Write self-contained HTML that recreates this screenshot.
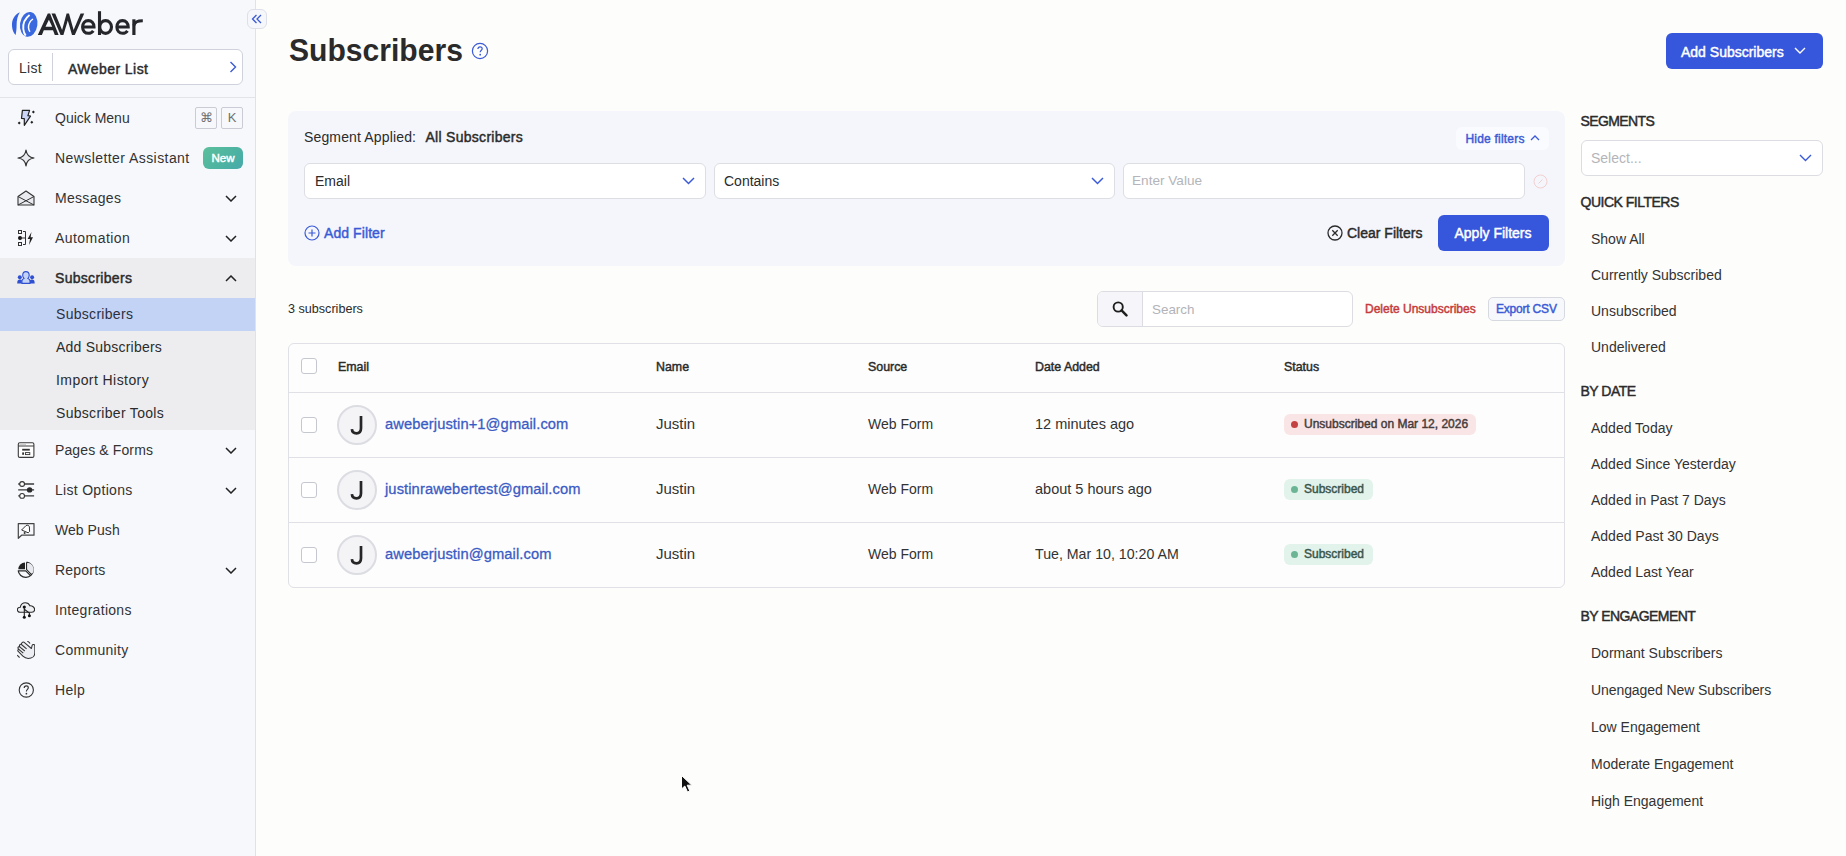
<!DOCTYPE html>
<html><head><meta charset="utf-8">
<style>
*{box-sizing:border-box;margin:0;padding:0}
html,body{width:1846px;height:856px;overflow:hidden}
body{position:relative;background:#fdfdfc;font-family:"Liberation Sans",sans-serif;color:#2b2b2b}
.a{position:absolute;white-space:nowrap}
#sb{position:absolute;left:0;top:0;width:256px;height:856px;background:#f7f8fc;border-right:1px solid #dfe2e8}
.row{position:absolute;left:0;width:255px;height:40px;line-height:40px;font-size:14px;color:#333}
.row .t{position:absolute;left:55px;top:0;letter-spacing:0.3px}
.row svg.ic{position:absolute;left:17px;top:11px}
.row svg.ch{position:absolute;left:225px;top:17px}
.sub{position:absolute;left:0;width:255px;height:33px;line-height:33px;font-size:14px;color:#2b2b2b}
.sub .t{position:absolute;left:56px;top:0;letter-spacing:0.3px}
</style></head><body>

<!-- SIDEBAR -->
<div id="sb">
  <!-- logo -->
  <svg class="a" style="left:0;top:0" width="40" height="42" viewBox="0 0 40 42">
    <path d="M19.8 12.3 C14.5 14.5 11.6 20 12 26 C12.3 30 13.8 33.5 15.6 35 C16.2 32 16.6 29 16.6 25.5 C16.6 20.5 17.5 16 19.8 12.3 Z" fill="#3463dd"/>
    <ellipse cx="28.7" cy="24.4" rx="8.7" ry="12.5" fill="#3a68de" transform="rotate(8 28.7 24.4)"/>
    <path d="M29.6 15 C25 18.5 22.8 24 23.3 29 C23.6 32 24.5 34 25.7 35.6" stroke="#fff" stroke-width="1.9" fill="none"/>
    <path d="M33 19 C30 21 28.4 24.5 28.5 27.5 C28.6 29.5 29.2 30.8 30 31.8" stroke="#fff" stroke-width="1.5" fill="none"/>
  </svg>
  <svg class="a" style="left:0;top:0" width="150" height="42" viewBox="0 0 150 42">
    <g fill="none" stroke="#25262b" stroke-width="3.3" stroke-linejoin="miter">
      <path d="M37.8 34.9 L47.8 13.4 L50.1 13.4 L58.6 34.9 L54.8 34.9 L53 30.3 L43.8 30.3 L41.9 34.9 Z M48.9 19.8 L45.5 26.7 L52.2 26.7 Z" fill="#25262b" stroke="none" fill-rule="evenodd"/>
      <path d="M51.5 13.4 L55.2 13.4 L62.1 30 L66.6 13.4 L69 13.4 L73.6 30 L80.6 13.4 L84.2 13.4 L74.8 35 L72 35 L67.8 20.6 L63.4 35 L60.6 35 Z" fill="#25262b" stroke="none"/>
      <path d="M82.6 27 L94 27 C94 23 91.5 20.6 88.3 20.6 C84.8 20.6 82.6 23.3 82.6 27 C82.6 30.8 85 33.3 88.4 33.3 C90.6 33.3 92.2 32.3 93.3 30.8" stroke-width="3.1"/>
      <path d="M99.5 11.2 L99.5 35" stroke-width="3.1"/>
      <ellipse cx="105.6" cy="27" rx="5.9" ry="6.35" stroke-width="3.1"/>
      <path d="M116.9 27 L128.2 27 C128.2 23 125.7 20.6 122.5 20.6 C119 20.6 116.9 23.3 116.9 27 C116.9 30.8 119.2 33.3 122.6 33.3 C124.8 33.3 126.4 32.3 127.5 30.8" stroke-width="3.1"/>
      <path d="M133.9 19.3 L133.9 35" stroke-width="3.2"/>
      <path d="M133.9 25.5 C134.5 22 137.5 20.8 142.8 20.8" stroke-width="3"/>
    </g>
  </svg>
  <!-- collapse btn -->
  <div class="a" style="left:247px;top:9px;width:20px;height:20px;border:1px solid #dde0e8;border-radius:6px;background:#f6f7fb;z-index:3"></div>
  <svg class="a" style="left:251px;top:14px;z-index:4" width="12" height="10" viewBox="0 0 12 10"><path d="M5.5 1 L1.5 5 L5.5 9 M10 1 L6 5 L10 9" stroke="#3b5bd6" stroke-width="1.3" fill="none"/></svg>

  <!-- list selector -->
  <div class="a" style="left:8px;top:49px;width:235px;height:36px;border:1px solid #cfd2da;border-radius:6px;background:#fff"></div>
  <div class="a" style="left:19px;top:50px;line-height:36px;font-size:14px;color:#333;letter-spacing:0.3px">List</div>
  <div class="a" style="left:52px;top:53px;width:1px;height:28px;background:#cfd2da"></div>
  <div class="a" style="left:68px;top:50.5px;line-height:36px;font-size:14px;color:#2b2b2b;letter-spacing:0.45px;-webkit-text-stroke:0.45px #2b2b2b;">AWeber List</div>
  <svg class="a" style="left:229px;top:61px" width="8" height="12" viewBox="0 0 8 12"><path d="M1.5 1 L6.5 6 L1.5 11" stroke="#3b5bd6" stroke-width="1.4" fill="none"/></svg>

  <div class="a" style="left:0;top:97px;width:255px;height:1px;background:#e2e4ea"></div>

  <!-- Quick menu -->
  <div class="row" style="top:98px">
    <svg class="ic" width="18" height="18" viewBox="0 0 18 18"><path d="M5.4 1.4 L12.6 1.4 L10.9 6.6 L13.5 7.1 L7.3 16.3 L7.3 9.7 L4.5 9.4 Z" fill="#c9d4f6" stroke="#222" stroke-width="1.2" stroke-linejoin="round"/><path d="M16.4 1.4 L17.9 2.9 L16.4 4.4 L14.9 2.9 Z M2.2 12.4 L3.7 13.9 L2.2 15.4 L0.7 13.9 Z M14.8 11.7 L16.3 13.2 L14.8 14.7 L13.3 13.2 Z" fill="#222"/></svg>
    <span class="t" style="letter-spacing:0">Quick Menu</span>
    <div class="a" style="left:195px;top:9px;width:22px;height:22px;border:1px solid #c9ccd4;border-radius:2px;line-height:20px;text-align:center;font-size:13px;color:#707070">&#8984;</div>
    <div class="a" style="left:221px;top:9px;width:22px;height:22px;border:1px solid #c9ccd4;border-radius:2px;line-height:20px;text-align:center;font-size:13px;color:#707070">K</div>
  </div>
  <!-- Newsletter -->
  <div class="row" style="top:138px">
    <svg class="ic" width="18" height="18" viewBox="0 0 18 18"><path d="M9 1 C9.6 6 12 8.4 17 9 C12 9.6 9.6 12 9 17 C8.4 12 6 9.6 1 9 C6 8.4 8.4 6 9 1 Z" fill="#e9eaef" stroke="#333" stroke-width="1.2" stroke-linejoin="round"/></svg>
    <span class="t" style="letter-spacing:0.43px">Newsletter Assistant</span>
    <div class="a" style="left:203px;top:9px;width:40px;height:22px;border-radius:6px;background:linear-gradient(135deg,#5cbf9c 0%,#4db3a2 60%,#47a9ab 100%);color:#fff;font-size:11.5px;line-height:22px;text-align:center;-webkit-text-stroke:0.45px #fff;">New</div>
  </div>
  <!-- Messages -->
  <div class="row" style="top:178px">
    <svg class="ic" width="18" height="18" viewBox="0 0 18 18"><path d="M1 7.5 L9 2 L17 7.5 L17 16 L1 16 Z" fill="#e9eaef" stroke="#333" stroke-width="1.1" stroke-linejoin="round"/><path d="M1 7.5 L17 16 M17 7.5 L1 16" fill="none" stroke="#333" stroke-width="1"/></svg>
    <span class="t">Messages</span>
    <svg class="ch" width="12" height="7" viewBox="0 0 12 7"><path d="M1 1 L6 6 L11 1" stroke="#222" stroke-width="1.5" fill="none"/></svg>
  </div>
  <!-- Automation -->
  <div class="row" style="top:218px">
    <svg class="ic" width="18" height="18" viewBox="0 0 18 18"><rect x="1.5" y="1.5" width="3" height="3" fill="none" stroke="#333" stroke-width="1"/><circle cx="3" cy="9" r="2" fill="#111"/><rect x="1.5" y="13.5" width="3" height="3" fill="none" stroke="#333" stroke-width="1"/><path d="M6 2.5 L8.5 2.5 L8.5 15.5 L6 15.5 M3 9 L8.5 9" fill="none" stroke="#333" stroke-width="1"/><path d="M14.5 3 L10.6 10 L13 10 L12 16 L16 8.3 L13.6 8.3 Z" fill="#222"/></svg>
    <span class="t" style="letter-spacing:0.45px">Automation</span>
    <svg class="ch" width="12" height="7" viewBox="0 0 12 7"><path d="M1 1 L6 6 L11 1" stroke="#222" stroke-width="1.5" fill="none"/></svg>
  </div>
  <!-- Subscribers group -->
  <div class="a" style="left:0;top:258px;width:255px;height:172px;background:#ededef"></div>
  <div class="row" style="top:258px">
    <svg class="ic" width="18" height="18" viewBox="0 0 18 18" style="top:12px"><circle cx="2.8" cy="7.2" r="2" fill="#2f50d2"/><path d="M0.2 13.4 C0.2 10.6 1.2 9.6 2.8 9.6 C3.9 9.6 4.5 10 4.9 10.6 L4.9 13.4 Z" fill="#2f50d2"/><circle cx="15.1" cy="7.2" r="2" fill="#2f50d2"/><path d="M17.7 13.4 C17.7 10.6 16.7 9.6 15.1 9.6 C14 9.6 13.4 10 13 10.6 L13 13.4 Z" fill="#2f50d2"/><path d="M8.9 1.6 C6.8 1.6 5.7 3.3 5.7 5.3 C5.7 6.8 6.3 7.8 7 8.4 L5.6 9.4 C5.1 9.9 4.9 10.7 4.9 11.5 L4.9 13.4 L13 13.4 L13 11.5 C13 10.7 12.8 9.9 12.3 9.4 L10.9 8.4 C11.6 7.8 12.2 6.8 12.2 5.3 C12.2 3.3 11 1.6 8.9 1.6 Z" fill="#c3d2f7" stroke="#3050d0" stroke-width="1.1"/></svg>
    <span class="t" style="letter-spacing:0.3px;color:#2b2b2b;-webkit-text-stroke:0.45px #2b2b2b;">Subscribers</span>
    <svg class="ch" width="12" height="7" viewBox="0 0 12 7"><path d="M1 6 L6 1 L11 6" stroke="#222" stroke-width="1.5" fill="none"/></svg>
  </div>
  <div class="a" style="left:0;top:298px;width:255px;height:33px;background:#c3d3f6"></div>
  <div class="sub" style="top:298px"><span class="t" style="color:#2b3040">Subscribers</span></div>
  <div class="sub" style="top:331px"><span class="t" style="letter-spacing:0.22px">Add Subscribers</span></div>
  <div class="sub" style="top:364px"><span class="t" style="letter-spacing:0.43px">Import History</span></div>
  <div class="sub" style="top:397px"><span class="t">Subscriber Tools</span></div>
  <!-- Pages & Forms -->
  <div class="row" style="top:430px">
    <svg class="ic" width="18" height="18" viewBox="0 0 18 18" style="top:12px"><rect x="1.3" y="0.8" width="15.6" height="14.6" rx="1.5" fill="#fff" stroke="#3a3a3a" stroke-width="1.1"/><path d="M1.3 4 L16.9 4" stroke="#3a3a3a" stroke-width="1"/><path d="M2.5 2.4 L9 2.4" stroke="#bbb" stroke-width="0.8"/><rect x="5.2" y="6.8" width="7.6" height="1.8" fill="#333"/><rect x="5.2" y="10.4" width="1.8" height="2.4" fill="#333"/><rect x="8.4" y="10.6" width="4.4" height="2" fill="none" stroke="#333" stroke-width="0.9"/></svg>
    <span class="t" style="letter-spacing:0.12px">Pages &amp; Forms</span>
    <svg class="ch" width="12" height="7" viewBox="0 0 12 7"><path d="M1 1 L6 6 L11 1" stroke="#222" stroke-width="1.5" fill="none"/></svg>
  </div>
  <!-- List Options -->
  <div class="row" style="top:470px">
    <svg class="ic" width="18" height="18" viewBox="0 0 18 18"><path d="M1.2 3 L17.1 3 M1.2 8.9 L17.1 8.9 M1.2 14.9 L17.1 14.9" stroke="#3a3a3a" stroke-width="1.3"/><circle cx="5.1" cy="3" r="2.4" fill="#fff" stroke="#333" stroke-width="1.1"/><circle cx="12.6" cy="8.9" r="2.7" fill="#2a2a2a"/><circle cx="5.1" cy="14.9" r="2.4" fill="#fff" stroke="#333" stroke-width="1.1"/></svg>
    <span class="t">List Options</span>
    <svg class="ch" width="12" height="7" viewBox="0 0 12 7"><path d="M1 1 L6 6 L11 1" stroke="#222" stroke-width="1.5" fill="none"/></svg>
  </div>
  <!-- Web Push -->
  <div class="row" style="top:510px">
    <svg class="ic" width="18" height="18" viewBox="0 0 18 18"><path d="M1.3 2.6 L17 2.6 L17 14.2 L4.6 14.2 L1.3 17.3 Z" fill="none" stroke="#444" stroke-width="1.2" stroke-linejoin="round"/><path d="M4.6 9 L9 4.6 C10.5 3.6 12 4.5 12.4 5.8 L12.6 10.4 L11.2 11.8 Z" fill="#fff" stroke="#333" stroke-width="1"/><circle cx="7.6" cy="12" r="1" fill="#333"/></svg>
    <span class="t" style="letter-spacing:0.05px">Web Push</span>
  </div>
  <!-- Reports -->
  <div class="row" style="top:550px">
    <svg class="ic" width="18" height="18" viewBox="0 0 18 18"><path d="M9.6 1.2 A7.6 7.6 0 1 1 1.2 9.5" fill="none" stroke="#2b2b2b" stroke-width="1.3"/><path d="M8 1.4 L8 8.3 L1.3 8.3 A7 7 0 0 1 8 1.4 Z" fill="#222"/><path d="M9.6 1.3 L9.6 8.6 L14.8 13.8" fill="none" stroke="#2b2b2b" stroke-width="1.2"/><path d="M1.3 9.8 L8.7 9.8 L13.7 14.9" fill="none" stroke="#2b2b2b" stroke-width="1.2"/><path d="M10.6 2 A6.5 6.5 0 0 1 15.2 12.6 L10.6 8 Z" fill="#e8e9ee"/></svg>
    <span class="t" style="letter-spacing:0.2px">Reports</span>
    <svg class="ch" width="12" height="7" viewBox="0 0 12 7"><path d="M1 1 L6 6 L11 1" stroke="#222" stroke-width="1.5" fill="none"/></svg>
  </div>
  <!-- Integrations -->
  <div class="row" style="top:590px">
    <svg class="ic" width="18" height="18" viewBox="0 0 18 18"><path d="M3.2 11.3 C1.3 11.3 0.4 10 0.4 8.8 C0.4 7.2 1.6 6.2 3.2 6.3 C3.8 3.7 5.7 1.7 8.3 1.7 C10.6 1.7 12.2 3 12.9 4.8 C15.3 4.6 17.6 6.2 17.6 8.4 C17.6 10.2 16.4 11.3 14.8 11.3 Z" fill="#eef0f4" stroke="#2b2b2b" stroke-width="1.1"/><path d="M7.3 6 L7.3 16.3 M7.3 8.2 L12.4 12 L12.4 14.6" fill="none" stroke="#222" stroke-width="1.1"/><circle cx="7.3" cy="6" r="1.6" fill="#111"/><circle cx="7.3" cy="16.3" r="1.5" fill="#111"/><circle cx="12.4" cy="14.7" r="1.5" fill="#111"/></svg>
    <span class="t">Integrations</span>
  </div>
  <!-- Community -->
  <div class="row" style="top:630px">
    <svg class="ic" width="18" height="18" viewBox="0 0 18 18" style="top:11px"><path d="M6.9 1.2 L14.4 7.5 L15.2 4.2 C15.6 3 17.8 3.2 17.8 4.8 L17.8 12 C17.8 15.3 15 17.4 11.3 17.4 C9 17.4 7.3 16.5 5.9 15.1 L1.2 10.4 C0.4 9.6 0.9 8.2 2.1 8.6 L1.2 7.6 C0.5 6.6 1.5 5.1 2.7 5.8 C2 4.5 3 2.8 4.4 3.5 C4.2 1.8 5.6 0.7 6.9 1.2 Z" fill="#eceef3" stroke="#333" stroke-width="1.05" stroke-linejoin="round"/><path d="M2.1 8.6 L6.3 12.2 M2.7 5.8 L7.8 10 M4.4 3.5 L9.6 7.8" fill="none" stroke="#333" stroke-width="1.05"/><path d="M10.3 0.3 C11.5 0.6 12.5 1.4 13 2.5" fill="none" stroke="#333" stroke-width="1.05"/><path d="M0.3 14 C0.8 15 1.6 15.9 2.7 16.4" fill="none" stroke="#333" stroke-width="1.05"/></svg>
    <span class="t">Community</span>
  </div>
  <!-- Help -->
  <div class="row" style="top:670px">
    <svg class="ic" width="18" height="18" viewBox="0 0 18 18"><circle cx="9.3" cy="9" r="7.1" fill="none" stroke="#333" stroke-width="1.1"/><path d="M7.2 7.1 C7.2 5.7 8.1 4.9 9.3 4.9 C10.5 4.9 11.3 5.7 11.3 6.8 C11.3 8.3 9.4 8.5 9.4 10.4" fill="none" stroke="#333" stroke-width="1.15"/><circle cx="9.4" cy="12.7" r="0.85" fill="#333"/></svg>
    <span class="t">Help</span>
  </div>
</div>

<!-- MAIN -->
<div class="a" style="left:288.5px;top:31.5px;font-size:31.5px;font-weight:700;line-height:36px;color:#2a2a2a;transform:scaleX(0.955);transform-origin:0 0">Subscribers</div>
<svg class="a" style="left:471px;top:42px" width="18" height="18" viewBox="0 0 18 18"><circle cx="9" cy="9" r="7.6" fill="none" stroke="#3b5bd6" stroke-width="1.2"/><path d="M6.9 7 C6.9 5.6 7.8 4.8 9.1 4.8 C10.3 4.8 11.2 5.6 11.2 6.7 C11.2 8.2 9.2 8.4 9.2 10.3" fill="none" stroke="#3b5bd6" stroke-width="1.2"/><circle cx="9.2" cy="12.7" r="0.9" fill="#3b5bd6"/></svg>

<!-- Add subscribers button -->
<div class="a" style="left:1666px;top:33px;width:157px;height:36px;border-radius:6px;background:#3656db"></div>
<div class="a" style="left:1681px;top:33.5px;line-height:36px;font-size:14px;color:#fff;-webkit-text-stroke:0.45px #fff">Add Subscribers</div>
<svg class="a" style="left:1794px;top:47px" width="12" height="7" viewBox="0 0 12 7"><path d="M1 1 L6 6 L11 1" stroke="#fff" stroke-width="1.4" fill="none"/></svg>

<!-- Filter panel -->
<div class="a" style="left:288px;top:111px;width:1277px;height:155px;border-radius:8px;background:#f4f6fc"></div>
<div class="a" style="left:304px;top:125px;line-height:24px;font-size:14px;color:#2b2b2b;letter-spacing:0.15px">Segment Applied:</div>
<div class="a" style="left:425.5px;top:125px;line-height:24px;font-size:14px;color:#2b2b2b;letter-spacing:0.28px;-webkit-text-stroke:0.45px #2b2b2b;">All Subscribers</div>
<div class="a" style="left:1456px;top:127px;width:93px;height:23px;border-radius:6px;background:#fafbfe"></div>
<div class="a" style="left:1465.5px;top:127.6px;line-height:23px;font-size:12px;color:#3b5bd6;letter-spacing:0.2px;-webkit-text-stroke:0.45px #3b5bd6;">Hide filters</div>
<svg class="a" style="left:1530px;top:135px" width="10" height="6" viewBox="0 0 10 6"><path d="M1 5 L5 1 L9 5" stroke="#3b5bd6" stroke-width="1.3" fill="none"/></svg>

<div class="a" style="left:304px;top:163px;width:402px;height:36px;border:1px solid #dddee3;border-radius:6px;background:#fff"></div>
<div class="a" style="left:315px;top:163px;line-height:36px;font-size:14px;color:#2b2b2b">Email</div>
<svg class="a" style="left:682px;top:177px" width="13" height="8" viewBox="0 0 13 8"><path d="M1 1 L6.5 6.5 L12 1" stroke="#3b5bd6" stroke-width="1.5" fill="none"/></svg>

<div class="a" style="left:714px;top:163px;width:401px;height:36px;border:1px solid #dddee3;border-radius:6px;background:#fff"></div>
<div class="a" style="left:724px;top:163px;line-height:36px;font-size:14px;color:#2b2b2b">Contains</div>
<svg class="a" style="left:1091px;top:177px" width="13" height="8" viewBox="0 0 13 8"><path d="M1 1 L6.5 6.5 L12 1" stroke="#3b5bd6" stroke-width="1.5" fill="none"/></svg>

<div class="a" style="left:1123px;top:163px;width:402px;height:36px;border:1px solid #dddee3;border-radius:6px;background:#fff"></div>
<div class="a" style="left:1132px;top:163px;line-height:36px;font-size:13.6px;color:#b4b5ba">Enter Value</div>
<svg class="a" style="left:1533px;top:174px" width="15" height="15" viewBox="0 0 15 15"><circle cx="7.5" cy="7.5" r="6.5" fill="none" stroke="#f3d0d0" stroke-width="1"/><path d="M5.5 9.5 L9.5 5.5" stroke="#f3d0d0" stroke-width="1"/></svg>

<svg class="a" style="left:304px;top:225px" width="16" height="16" viewBox="0 0 16 16"><circle cx="8" cy="8" r="7" fill="none" stroke="#3b5bd6" stroke-width="1.2"/><path d="M8 4.5 L8 11.5 M4.5 8 L11.5 8" stroke="#3b5bd6" stroke-width="1.2"/></svg>
<div class="a" style="left:324px;top:221px;line-height:24px;font-size:14px;color:#3b5bd6;letter-spacing:0.08px;-webkit-text-stroke:0.45px #3b5bd6;">Add Filter</div>

<svg class="a" style="left:1327px;top:225px" width="16" height="16" viewBox="0 0 16 16"><circle cx="8" cy="8" r="7" fill="none" stroke="#2b2b2b" stroke-width="1.3"/><path d="M5.3 5.3 L10.7 10.7 M10.7 5.3 L5.3 10.7" stroke="#2b2b2b" stroke-width="1.3"/></svg>
<div class="a" style="left:1347px;top:221px;line-height:24px;font-size:14px;color:#2b2b2b;-webkit-text-stroke:0.45px #2b2b2b;">Clear Filters</div>
<div class="a" style="left:1438px;top:215px;width:111px;height:36px;border-radius:6px;background:#3656db"></div>
<div class="a" style="left:1454.5px;top:214.5px;line-height:36px;font-size:14px;color:#fff;-webkit-text-stroke:0.45px #fff">Apply Filters</div>

<!-- Count + search -->
<div class="a" style="left:288px;top:300px;line-height:18px;font-size:12.6px;color:#2b2b2b">3 subscribers</div>
<div class="a" style="left:1097px;top:291px;width:256px;height:36px;border:1px solid #dcdde2;border-radius:6px;background:#fff"></div>
<div class="a" style="left:1098px;top:292px;width:45px;height:34px;border-right:1px solid #dcdde2;border-radius:5px 0 0 5px;background:#f6f6fa"></div>
<svg class="a" style="left:1111px;top:300px" width="18" height="18" viewBox="0 0 18 18"><circle cx="7.2" cy="7" r="4.6" fill="none" stroke="#1e1e1e" stroke-width="1.9"/><path d="M10.6 10.4 L15.5 15.3" stroke="#1e1e1e" stroke-width="2.5" stroke-linecap="round"/></svg>
<div class="a" style="left:1152px;top:292px;line-height:36px;font-size:13.4px;color:#b2b3b8">Search</div>
<div class="a" style="left:1365px;top:299.7px;line-height:18px;font-size:12px;color:#c53b3b;-webkit-text-stroke:0.45px #c53b3b;">Delete Unsubscribes</div>
<div class="a" style="left:1488px;top:297px;width:77px;height:24px;border:1px solid #d6d9e0;border-radius:5px;background:#f7f8fc"></div>
<div class="a" style="left:1496px;top:296.7px;line-height:24px;font-size:12px;color:#3b5bd6;letter-spacing:-0.2px;-webkit-text-stroke:0.45px #3b5bd6;">Export CSV</div>

<!-- Table -->
<div class="a" style="left:288px;top:343px;width:1277px;height:245px;border:1px solid #dfe1e6;border-radius:6px;background:#fdfdfd"></div>
<div class="a" style="left:289px;top:392px;width:1275px;height:1px;background:#dfe1e6"></div>
<div class="a" style="left:289px;top:457px;width:1275px;height:1px;background:#dfe1e6"></div>
<div class="a" style="left:289px;top:522px;width:1275px;height:1px;background:#dfe1e6"></div>

<div class="a" style="left:301px;top:358px;width:16px;height:16px;border:1px solid #c5c8cf;border-radius:3px;background:#fff"></div>
<div class="a" style="left:338px;top:358.8px;line-height:16px;font-size:12.4px;color:#2b2b2b;-webkit-text-stroke:0.45px #2b2b2b;">Email</div>
<div class="a" style="left:656px;top:358.8px;line-height:16px;font-size:12.4px;color:#2b2b2b;-webkit-text-stroke:0.45px #2b2b2b;">Name</div>
<div class="a" style="left:868px;top:358.8px;line-height:16px;font-size:12.4px;color:#2b2b2b;-webkit-text-stroke:0.45px #2b2b2b;">Source</div>
<div class="a" style="left:1035px;top:358.8px;line-height:16px;font-size:12.4px;color:#2b2b2b;-webkit-text-stroke:0.45px #2b2b2b;">Date Added</div>
<div class="a" style="left:1284px;top:358.8px;line-height:16px;font-size:12.4px;color:#2b2b2b;-webkit-text-stroke:0.45px #2b2b2b;">Status</div>

<!-- row 1 -->
<div class="a" style="left:301px;top:417px;width:16px;height:16px;border:1px solid #c5c8cf;border-radius:3px;background:#fff"></div>
<div class="a" style="left:337px;top:405px;width:40px;height:40px;border:2px solid #dcdde2;border-radius:50%;background:#f4f4f7"><svg style="position:absolute;left:-2px;top:-2px" width="40" height="40" viewBox="0 0 40 40"><path d="M24 11 L24 23.3 C24 26.9 22 28.3 19.4 28.3 C16.8 28.3 15.1 26.9 14.9 24.2" fill="none" stroke="#262626" stroke-width="2.7"/></svg></div>
<div class="a" style="left:385px;top:413px;line-height:22px;font-size:14.7px;color:#3b5bc4;-webkit-text-stroke:0.3px #3b5bc4;letter-spacing:0.1px">aweberjustin+1@gmail.com</div>
<div class="a" style="left:656px;top:413px;line-height:22px;font-size:15px;color:#333">Justin</div>
<div class="a" style="left:868px;top:413px;line-height:22px;font-size:14px;color:#333">Web Form</div>
<div class="a" style="left:1035px;top:413px;line-height:22px;font-size:14.5px;color:#333">12 minutes ago</div>
<div class="a" style="left:1284px;top:414px;width:192px;height:21px;border-radius:6px;background:#f9e5e5"></div>
<div class="a" style="left:1291px;top:421px;width:7px;height:7px;border-radius:50%;background:#c44141"></div>
<div class="a" style="left:1304px;top:413.5px;line-height:20px;font-size:12px;color:#463c3c;-webkit-text-stroke:0.45px #463c3c;">Unsubscribed on Mar 12, 2026</div>

<!-- row 2 -->
<div class="a" style="left:301px;top:482px;width:16px;height:16px;border:1px solid #c5c8cf;border-radius:3px;background:#fff"></div>
<div class="a" style="left:337px;top:470px;width:40px;height:40px;border:2px solid #dcdde2;border-radius:50%;background:#f4f4f7"><svg style="position:absolute;left:-2px;top:-2px" width="40" height="40" viewBox="0 0 40 40"><path d="M24 11 L24 23.3 C24 26.9 22 28.3 19.4 28.3 C16.8 28.3 15.1 26.9 14.9 24.2" fill="none" stroke="#262626" stroke-width="2.7"/></svg></div>
<div class="a" style="left:385px;top:478px;line-height:22px;font-size:14.7px;color:#3b5bc4;-webkit-text-stroke:0.3px #3b5bc4;letter-spacing:0.1px">justinrawebertest@gmail.com</div>
<div class="a" style="left:656px;top:478px;line-height:22px;font-size:15px;color:#333">Justin</div>
<div class="a" style="left:868px;top:478px;line-height:22px;font-size:14px;color:#333">Web Form</div>
<div class="a" style="left:1035px;top:478px;line-height:22px;font-size:14.5px;color:#333">about 5 hours ago</div>
<div class="a" style="left:1284px;top:479px;width:89px;height:21px;border-radius:6px;background:#e1f3eb"></div>
<div class="a" style="left:1291px;top:486px;width:7px;height:7px;border-radius:50%;background:#6bb595"></div>
<div class="a" style="left:1304px;top:478.5px;line-height:20px;font-size:12px;color:#3c554b;-webkit-text-stroke:0.45px #3c554b;">Subscribed</div>

<!-- row 3 -->
<div class="a" style="left:301px;top:547px;width:16px;height:16px;border:1px solid #c5c8cf;border-radius:3px;background:#fff"></div>
<div class="a" style="left:337px;top:535px;width:40px;height:40px;border:2px solid #dcdde2;border-radius:50%;background:#f4f4f7"><svg style="position:absolute;left:-2px;top:-2px" width="40" height="40" viewBox="0 0 40 40"><path d="M24 11 L24 23.3 C24 26.9 22 28.3 19.4 28.3 C16.8 28.3 15.1 26.9 14.9 24.2" fill="none" stroke="#262626" stroke-width="2.7"/></svg></div>
<div class="a" style="left:385px;top:543px;line-height:22px;font-size:14.7px;color:#3b5bc4;-webkit-text-stroke:0.3px #3b5bc4;letter-spacing:0.1px">aweberjustin@gmail.com</div>
<div class="a" style="left:656px;top:543px;line-height:22px;font-size:15px;color:#333">Justin</div>
<div class="a" style="left:868px;top:543px;line-height:22px;font-size:14px;color:#333">Web Form</div>
<div class="a" style="left:1035px;top:543px;line-height:22px;font-size:14.2px;color:#333">Tue, Mar 10, 10:20 AM</div>
<div class="a" style="left:1284px;top:544px;width:89px;height:21px;border-radius:6px;background:#e1f3eb"></div>
<div class="a" style="left:1291px;top:551px;width:7px;height:7px;border-radius:50%;background:#6bb595"></div>
<div class="a" style="left:1304px;top:543.5px;line-height:20px;font-size:12px;color:#3c554b;-webkit-text-stroke:0.45px #3c554b;">Subscribed</div>

<!-- Right panel -->
<div class="a" style="left:1580.5px;top:112.2px;line-height:18px;font-size:14px;color:#2b2b2b;letter-spacing:-0.6px;-webkit-text-stroke:0.45px #2b2b2b;">SEGMENTS</div>
<div class="a" style="left:1581px;top:140px;width:242px;height:36px;border:1px solid #dcdde2;border-radius:6px;background:#fff"></div>
<div class="a" style="left:1591px;top:140px;line-height:36px;font-size:14px;color:#b4b5ba">Select...</div>
<svg class="a" style="left:1799px;top:154px" width="13" height="8" viewBox="0 0 13 8"><path d="M1 1 L6.5 6.5 L12 1" stroke="#3b5bd6" stroke-width="1.4" fill="none"/></svg>

<div class="a" style="left:1580.5px;top:193px;line-height:18px;font-size:14px;color:#2b2b2b;letter-spacing:-0.5px;-webkit-text-stroke:0.45px #2b2b2b;">QUICK FILTERS</div>
<div class="a" style="left:1591px;top:230px;line-height:18px;font-size:14px;color:#333">Show All</div>
<div class="a" style="left:1591px;top:266px;line-height:18px;font-size:14px;color:#333">Currently Subscribed</div>
<div class="a" style="left:1591px;top:302px;line-height:18px;font-size:14px;color:#333">Unsubscribed</div>
<div class="a" style="left:1591px;top:338px;line-height:18px;font-size:14px;color:#333">Undelivered</div>
<div class="a" style="left:1580.5px;top:382.4px;line-height:18px;font-size:14px;color:#2b2b2b;letter-spacing:-0.5px;-webkit-text-stroke:0.45px #2b2b2b;">BY DATE</div>
<div class="a" style="left:1591px;top:419px;line-height:18px;font-size:14px;color:#333">Added Today</div>
<div class="a" style="left:1591px;top:455px;line-height:18px;font-size:14px;color:#333">Added Since Yesterday</div>
<div class="a" style="left:1591px;top:491px;line-height:18px;font-size:14px;color:#333">Added in Past 7 Days</div>
<div class="a" style="left:1591px;top:527px;line-height:18px;font-size:14px;color:#333">Added Past 30 Days</div>
<div class="a" style="left:1591px;top:563px;line-height:18px;font-size:14px;color:#333">Added Last Year</div>
<div class="a" style="left:1580.5px;top:607.4px;line-height:18px;font-size:14px;color:#2b2b2b;letter-spacing:-0.55px;-webkit-text-stroke:0.45px #2b2b2b;">BY ENGAGEMENT</div>
<div class="a" style="left:1591px;top:644px;line-height:18px;font-size:14px;color:#333">Dormant Subscribers</div>
<div class="a" style="left:1591px;top:681px;line-height:18px;font-size:14px;color:#333;letter-spacing:-0.08px">Unengaged New Subscribers</div>
<div class="a" style="left:1591px;top:718px;line-height:18px;font-size:14px;color:#333">Low Engagement</div>
<div class="a" style="left:1591px;top:755px;line-height:18px;font-size:14px;color:#333">Moderate Engagement</div>
<div class="a" style="left:1591px;top:792px;line-height:18px;font-size:14px;color:#333">High Engagement</div>

<!-- cursor -->
<svg class="a" style="left:680px;top:774px" width="14" height="20" viewBox="0 0 14 20"><path d="M1.5 1.5 L1.5 15 L4.8 12 L7.5 18 L9.8 17 L7.2 11.2 L11.8 11.2 Z" fill="#111" stroke="#fff" stroke-width="1"/></svg>

</body></html>
